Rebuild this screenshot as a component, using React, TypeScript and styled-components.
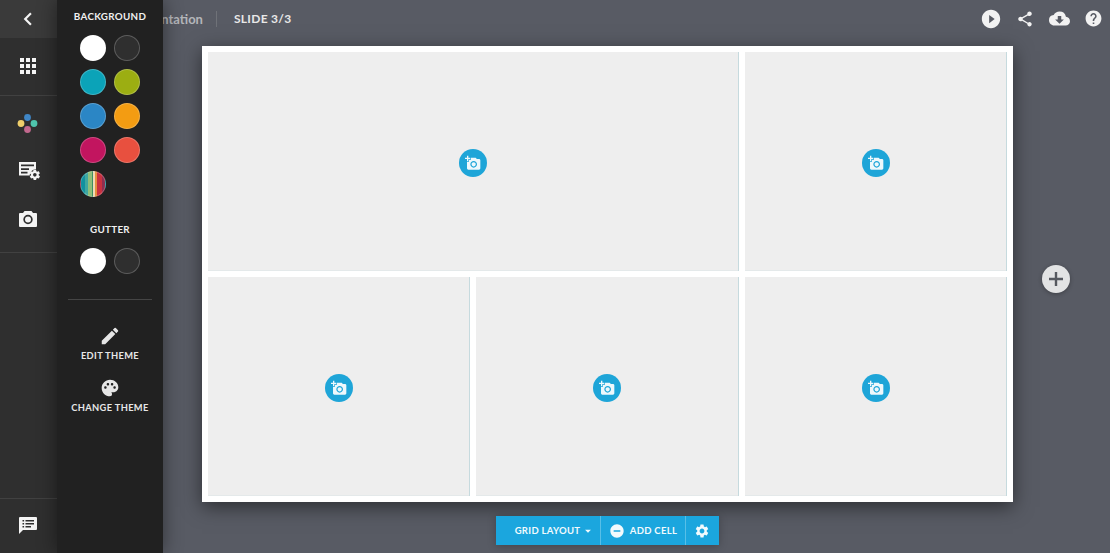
import { FC, ReactNode } from 'react';
import styled, { createGlobalStyle } from 'styled-components';
import {
  MdAddAPhoto,
  MdApps,
  MdArrowDropDown,
  MdChevronLeft,
  MdCloudDownload,
  MdEdit,
  MdHelp,
  MdPalette,
  MdPlayCircleFilled,
  MdRemoveCircle,
  MdSettings,
  MdShare,
} from 'react-icons/md';

const GlobalStyle = createGlobalStyle`
  html, body {
    margin: 0;
    height: 100%;
  }
  body {
    font-family: Lato, "Open Sans", sans-serif;
    background: #585b64;
    overflow: hidden;
  }
`;

const Page = styled.div`
  position: relative;
  display: flex;
  width: 1110px;
  height: 553px;
  overflow: hidden;
`;

const Rail = styled.div`
  width: 57px;
  flex: none;
  display: flex;
  flex-direction: column;
  background: #2f2f2f;
  color: #f4f4f4;
`;

const RailBack = styled.div`
  height: 38px;
  padding-right: 2px;
  display: flex;
  align-items: center;
  justify-content: center;
  background: #3a3a3a;
`;

const RailGroup = styled.div<{ $height: number; $padding: string }>`
  height: ${({ $height }) => $height}px;
  padding: ${({ $padding }) => $padding};
  display: flex;
  flex-direction: column;
  border-bottom: 1px solid #414141;
  box-sizing: border-box;
`;

const RailSlot = styled.div<{ $shift?: number }>`
  height: 48px;
  flex: none;
  padding: 0 2px 0 ${({ $shift }) => $shift ?? 0}px;
  display: flex;
  align-items: center;
  justify-content: center;
`;

const RailSpacer = styled.div`
  flex: 1;
  border-bottom: 1px solid #414141;
`;

const RailFoot = styled.div`
  height: 54px;
  box-sizing: border-box;
  padding: 0 2px 2px 0;
  display: flex;
  align-items: center;
  justify-content: center;
`;

const Panel = styled.div`
  position: absolute;
  z-index: 2;
  top: 0;
  left: 57px;
  bottom: 0;
  width: 106px;
  display: flex;
  flex-direction: column;
  align-items: center;
  background: #212121;
  color: #fff;
  box-shadow: 0 0 18px rgb(0 0 0 / 45%);
`;

const PanelTitle = styled.div<{ $top: number }>`
  margin-top: ${({ $top }) => $top}px;
  font-size: 9.8px;
  line-height: 14px;
  font-weight: 700;
  letter-spacing: 0.3px;
  color: #f0f0f0;
`;

const Swatches = styled.div`
  margin-top: 12px;
  display: grid;
  grid-template-columns: 26px 26px;
  grid-auto-rows: 26px;
  gap: 8px;
`;

const Swatch = styled.div<{ $fill: string }>`
  border-radius: 50%;
  box-sizing: border-box;
  background: ${({ $fill }) => $fill};
  border: 1px solid rgb(255 255 255 / 22%);
`;

const PanelRule = styled.div`
  align-self: stretch;
  height: 1px;
  margin: 25px 11px 0;
  background: #454545;
`;

const PanelActionBox = styled.div<{ $top: number }>`
  margin-top: ${({ $top }) => $top}px;
  display: flex;
  flex-direction: column;
  align-items: center;
  gap: 2px;
  font-size: 9.3px;
  line-height: 13px;
  font-weight: 700;
  letter-spacing: 0.35px;
  color: #e6e6e6;
  white-space: nowrap;
`;

const PanelActionIcon = styled.div`
  height: 22px;
  display: flex;
  align-items: center;
`;

const Main = styled.div`
  flex: 1;
  min-width: 0;
  display: flex;
  flex-direction: column;
`;

const TopBar = styled.div`
  height: 37px;
  flex: none;
  display: flex;
  align-items: center;
  padding-left: 72px;
  font-weight: 700;
`;

const DeckName = styled.div`
  font-size: 13px;
  color: #b4b6ba;
  padding-right: 13px;
  border-right: 1px solid #6f7278;
  line-height: 16px;
`;

const SlideName = styled.div`
  margin-left: 17px;
  font-size: 12px;
  letter-spacing: 0.3px;
  color: #e8e8e8;
`;

const TopActions = styled.div`
  margin-left: auto;
  display: flex;
  color: #f2f2f2;
`;

const TopAction = styled.div`
  width: 34px;
  display: flex;
  align-items: center;
  justify-content: center;
`;

const Stage = styled.div`
  flex: 1;
  display: flex;
  flex-direction: column;
  align-items: flex-start;
  padding: 9px 0 0 145px;
`;

const StageRow = styled.div`
  display: flex;
  align-items: center;
`;

const Slide = styled.div`
  width: 811px;
  height: 456px;
  box-sizing: border-box;
  padding: 6px;
  display: grid;
  grid-template-columns: repeat(6, 1fr);
  grid-template-rows: 219px 219px;
  gap: 6px;
  background: #fff;
  box-shadow: 0 5px 18px rgb(0 0 0 / 50%);
`;

const CellBox = styled.div<{ $span: number }>`
  grid-column: span ${({ $span }) => $span};
  padding-top: 3px;
  display: flex;
  align-items: center;
  justify-content: center;
  background: #eeeeee;
  box-shadow: inset -1px 0 0 #c6dade, inset 0 -1px 0 #e4e9ea;
`;

const CellButton = styled.div`
  width: 28px;
  height: 28px;
  border-radius: 50%;
  display: flex;
  align-items: center;
  justify-content: center;
  background: #1ea5d8;
  color: #eef8fc;
`;

const AddSlide = styled.div`
  width: 28px;
  height: 28px;
  margin: 10px 0 0 29px;
  border-radius: 50%;
  display: flex;
  align-items: center;
  justify-content: center;
  background: #e2e3e4;
  box-shadow: 0 1px 4px rgb(0 0 0 / 30%);
`;

const ToolbarBox = styled.div`
  align-self: flex-start;
  margin: 14px 0 0 294px;
  height: 29px;
  display: flex;
  background: #1ba6de;
  color: #f2fafd;
  box-shadow: 0 1px 8px rgb(0 0 0 / 25%);
  font-size: 9.5px;
  font-weight: 700;
  letter-spacing: 0.3px;
  white-space: nowrap;
`;

const ToolbarItem = styled.div<{ $width: number; $last?: boolean }>`
  width: ${({ $width }) => $width}px;
  box-sizing: border-box;
  display: flex;
  align-items: center;
  justify-content: center;
  gap: 5px;
  border-right: ${({ $last }) => ($last ? 'none' : '1px solid #58bfe7')};
`;

const GridItem = styled(ToolbarItem)`
  padding-left: 14px;
  gap: 0;
`;

const GearItem = styled(ToolbarItem)`
  padding-right: 2px;
`;

const Caret = styled(MdArrowDropDown)`
  margin-left: 1px;
`;

// rail icon: form list with a gear on its lower right corner
const FormSettingsIcon: FC = () => (
  <svg width="22" height="19" viewBox="0 0 22 19">
    <path fill="currentColor" fillRule="evenodd" d="M0 0h17v7.2a6 6 0 0 0-6.3 6.3H0z M2 2.6v1.7h13V2.6z M2 6.2v1.7h8V6.2z M2 9.8v1.7h6.5V9.8z" />
    <g transform="translate(9.6 6.6) scale(0.52)">
      <path fill="currentColor" d="M19.4 13c0-.3.1-.6.1-1s0-.7-.1-1l2.1-1.6c.2-.2.2-.4.1-.6l-2-3.5c-.1-.2-.4-.3-.6-.2l-2.5 1c-.5-.4-1.1-.7-1.7-1l-.4-2.6c0-.3-.2-.5-.5-.5h-4c-.2 0-.5.2-.5.4l-.4 2.7c-.6.2-1.1.6-1.7 1l-2.5-1c-.2-.1-.5 0-.6.2l-2 3.5c-.1.2 0 .4.1.6L4.6 11c0 .3-.1.6-.1 1s0 .7.1 1l-2.1 1.6c-.2.2-.2.4-.1.6l2 3.5c.1.2.4.3.6.2l2.5-1c.5.4 1.1.7 1.7 1l.4 2.6c0 .3.2.5.5.5h4c.2 0 .5-.2.5-.4l.4-2.7c.6-.2 1.2-.6 1.7-1l2.5 1c.2.1.5 0 .6-.2l2-3.5c.1-.2.1-.4-.1-.6zM12 15.5a3.5 3.5 0 1 1 0-7 3.5 3.5 0 0 1 0 7z" />
    </g>
  </svg>
);

const ColorDotsIcon: FC = () => (
  <svg width="21" height="21" viewBox="0 0 21 21">
    <circle cx="10.5" cy="4.5" r="3.4" fill="#3f86c6" />
    <circle cx="4" cy="10.5" r="3.4" fill="#efcf6b" />
    <circle cx="17" cy="10.5" r="3.4" fill="#4fc4ad" />
    <circle cx="10.5" cy="16.5" r="3.4" fill="#c2688e" />
  </svg>
);

const CameraIcon: FC = () => (
  <svg width="18" height="16" viewBox="0 0 18 16">
    <path fill="currentColor" fillRule="evenodd" d="M5.5 0h7L14 2h3a1 1 0 0 1 1 1v12a1 1 0 0 1-1 1H1a1 1 0 0 1-1-1V3a1 1 0 0 1 1-1h3z M9 3.8a4.7 4.7 0 1 0 0 9.4 4.7 4.7 0 0 0 0-9.4z M9 5.5a3 3 0 1 1 0 6 3 3 0 0 1 0-6z" />
  </svg>
);

const ChatListIcon: FC = () => (
  <svg width="18" height="17" viewBox="0 0 18 17">
    <path fill="currentColor" fillRule="evenodd" d="M1 0h16a1 1 0 0 1 1 1v11a1 1 0 0 1-1 1H4l-4 4V1a1 1 0 0 1 1-1z M3.5 3v1.6h1.6V3z M6.5 3v1.6h8.5V3z M3.5 6v1.6h1.6V6z M6.5 6v1.6h8.5V6z M3.5 9v1.6h1.6V9z M6.5 9v1.6h5.5V9z" />
  </svg>
);

const stripes =
  'linear-gradient(90deg, #12919f 0 18%, #3fa7a0 18% 30%, #8fbf7a 30% 44%, #3f8f63 44% 52%, #f0d9b5 52% 60%, #e58f3f 60% 68%, #c9303f 68% 86%, #8f2f4f 86%)';

const Toolbar: FC = () => (
  <ToolbarBox>
    <GridItem $width={105}>
      GRID LAYOUT
      <Caret size={14} />
    </GridItem>
    <ToolbarItem $width={85}>
      <MdRemoveCircle size={16} />
      ADD CELL
    </ToolbarItem>
    <GearItem $width={33} $last>
      <MdSettings size={16} />
    </GearItem>
  </ToolbarBox>
);

const Cell: FC<{ span: number }> = ({ span }) => (
  <CellBox $span={span}>
    <CellButton>
      <MdAddAPhoto size={16} />
    </CellButton>
  </CellBox>
);

const PanelAction: FC<{ top: number; icon: ReactNode; label: string }> = ({ top, icon, label }) => (
  <PanelActionBox $top={top}>
    <PanelActionIcon>{icon}</PanelActionIcon>
    {label}
  </PanelActionBox>
);

export default function App() {
  return (
    <Page>
      <GlobalStyle />
      <Rail>
        <RailBack>
          <MdChevronLeft size={26} />
        </RailBack>
        <RailGroup $height={58} $padding="4px 0 0">
          <RailSlot>
            <MdApps size={24} />
          </RailSlot>
        </RailGroup>
        <RailGroup $height={157} $padding="3px 0 0">
          <RailSlot>
            <ColorDotsIcon />
          </RailSlot>
          <RailSlot $shift={4}>
            <FormSettingsIcon />
          </RailSlot>
          <RailSlot>
            <CameraIcon />
          </RailSlot>
        </RailGroup>
        <RailSpacer />
        <RailFoot>
          <ChatListIcon />
        </RailFoot>
      </Rail>

      <Panel>
        <PanelTitle $top={9}>BACKGROUND</PanelTitle>
        <Swatches>
          <Swatch $fill="#ffffff" />
          <Swatch $fill="#2f2f2f" />
          <Swatch $fill="#0ba3b8" />
          <Swatch $fill="#9cae12" />
          <Swatch $fill="#2b86c5" />
          <Swatch $fill="#f39c12" />
          <Swatch $fill="#c2155f" />
          <Swatch $fill="#e8503f" />
          <Swatch $fill={stripes} />
        </Swatches>
        <PanelTitle $top={25}>GUTTER</PanelTitle>
        <Swatches>
          <Swatch $fill="#ffffff" />
          <Swatch $fill="#2f2f2f" />
        </Swatches>
        <PanelRule />
        <PanelAction top={25} icon={<MdEdit size={22} />} label="EDIT THEME" />
        <PanelAction top={15} icon={<MdPalette size={20} />} label="CHANGE THEME" />
      </Panel>

      <Main>
        <TopBar>
          <DeckName>Presentation</DeckName>
          <SlideName>SLIDE 3/3</SlideName>
          <TopActions>
            <TopAction>
              <MdPlayCircleFilled size={22} />
            </TopAction>
            <TopAction>
              <MdShare size={18} />
            </TopAction>
            <TopAction>
              <MdCloudDownload size={21} />
            </TopAction>
            <TopAction>
              <MdHelp size={19} />
            </TopAction>
          </TopActions>
        </TopBar>
        <Stage>
          <StageRow>
            <Slide>
              <Cell span={4} />
              <Cell span={2} />
              <Cell span={2} />
              <Cell span={2} />
              <Cell span={2} />
            </Slide>
            <AddSlide>
              <svg width="18" height="18" viewBox="0 0 18 18">
                <path d="M9 2v14M2 9h14" stroke="#55585f" strokeWidth="2.4" />
              </svg>
            </AddSlide>
          </StageRow>
          <Toolbar />
        </Stage>
      </Main>
    </Page>
  );
}
